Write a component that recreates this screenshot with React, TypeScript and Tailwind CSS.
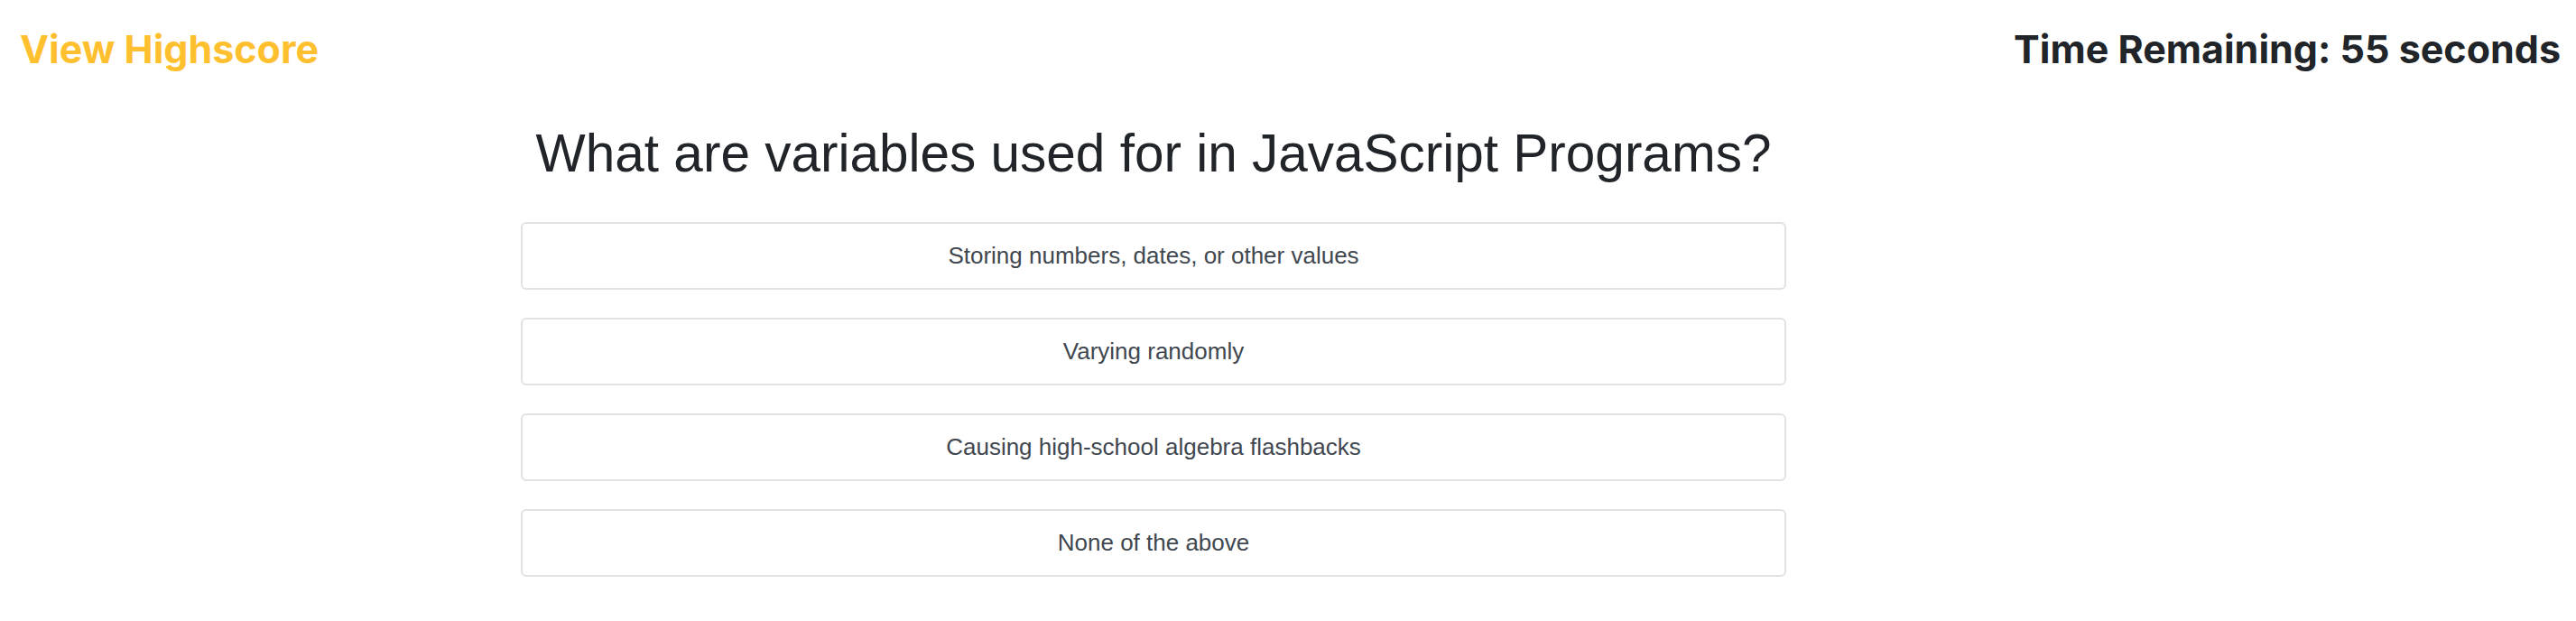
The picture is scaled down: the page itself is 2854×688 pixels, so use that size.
export default function App() {
  const answers = [
    "Storing numbers, dates, or other values",
    "Varying randomly",
    "Causing high-school algebra flashbacks",
    "None of the above",
  ];
  return (
    <div className="min-h-[688px] w-full bg-white">
      <header className="flex items-start justify-between pl-[22px] pr-[17px] pt-[27px]">
        <a
          href="#"
          className="font-['Inter',sans-serif] text-[43px] font-bold leading-[54px] text-[#ffc02f]"
        >
          View Highscore
        </a>
        <div className="font-['Inter',sans-serif] text-[43px] font-bold leading-[54px] text-[#212529]">
          Time Remaining: 55 seconds
        </div>
      </header>
      <main className="ml-[577px] w-[1402px]">
        <h1 className="mt-[54px] text-center font-['Liberation_Sans',Arial,sans-serif] text-[58.5px] font-normal leading-[70px] text-[#212529]">
          What are variables used for in JavaScript Programs?
        </h1>
        <div className="mt-[41px] flex flex-col gap-[31px]">
          {answers.map((a) => (
            <button
              key={a}
              className="flex h-[75px] w-full items-center justify-center rounded-[6px] border-2 border-[#e2e2e2] bg-white font-['Liberation_Sans',Arial,sans-serif] text-[26px] leading-[39px] text-[#40474f]"
            >
              {a}
            </button>
          ))}
        </div>
      </main>
    </div>
  );
}
